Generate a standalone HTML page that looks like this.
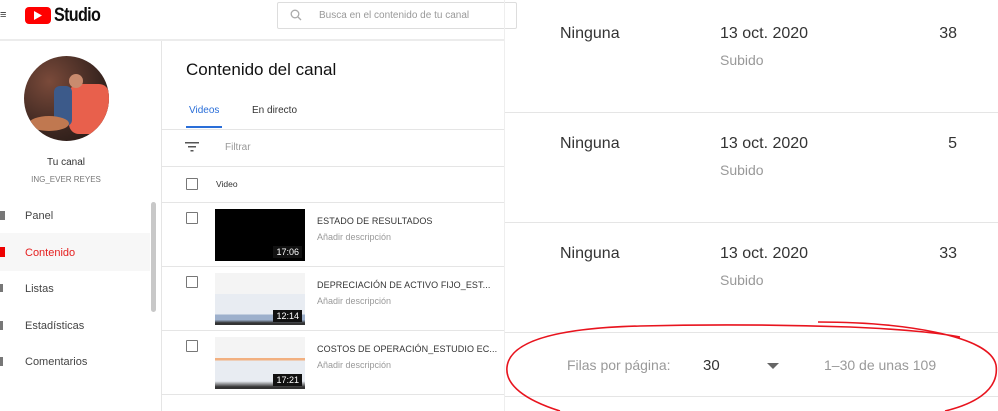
<!DOCTYPE html>
<html><head><meta charset="utf-8"><style>
*{margin:0;padding:0;box-sizing:border-box}
body{width:998px;height:411px;overflow:hidden;background:#fff;font-family:"Liberation Sans",sans-serif;position:relative;color:#0d0d0d}
.a{position:absolute}
.l{position:absolute;background:#e5e5e5}
.side{font-size:11px;color:#444}
.ttl{font-size:9px;color:#333;letter-spacing:.1px}
.desc{font-size:9px;color:#999}
.cb{position:absolute;width:12px;height:12px;border:1.5px solid #777;border-radius:1px}
.dur{position:absolute;right:3px;bottom:3px;background:#111;color:#fff;font-size:9px;padding:1px 3px}
.r{font-size:16px;color:#333}
.s{font-size:14px;color:#999}
</style></head><body>
<div class="a" style="left:0;top:9px;font-size:11px;color:#333">≡</div>
<div class="a" style="left:25px;top:7px;width:26px;height:17px;background:#f00;border-radius:4px"></div>
<svg class="a" style="left:34px;top:11px" width="9" height="9"><polygon points="0,0 8,4.5 0,9" fill="#fff"/></svg>
<div class="a" style="left:54px;top:5px;font-size:19px;line-height:22px;font-weight:bold;letter-spacing:-0.8px;transform:scaleX(.85);transform-origin:left">Studio</div>
<div class="a" style="left:277px;top:2px;width:240px;height:27px;border:1px solid #ddd;border-radius:2px"></div>
<svg class="a" style="left:290px;top:9px" width="12" height="12"><circle cx="5" cy="5" r="3.8" stroke="#aaa" stroke-width="1.3" fill="none"/><line x1="8" y1="8" x2="11" y2="11" stroke="#aaa" stroke-width="1.3"/></svg>
<div class="a" style="left:319px;top:10px;font-size:10px;color:#999">Busca en el contenido de tu canal</div>
<div class="l" style="left:0;top:39px;width:505px;height:2px;background:#ececec"></div>
<div class="l" style="left:161px;top:41px;width:1px;height:370px"></div>
<div class="a" style="left:24px;top:56px;width:85px;height:85px;border-radius:50%;overflow:hidden;background:radial-gradient(circle at 30% 30%,#7a4a3a,#3b2620 60%,#1e1512)">
<div class="a" style="left:45px;top:28px;width:40px;height:50px;background:#e8604c;border-radius:10px"></div>
<div class="a" style="left:45px;top:18px;width:14px;height:14px;background:#c98b6e;border-radius:50%"></div>
<div class="a" style="left:30px;top:30px;width:18px;height:40px;background:#3c5a8a;border-radius:6px"></div>
<div class="a" style="left:5px;top:60px;width:40px;height:15px;background:#c07850;border-radius:50%"></div>
</div>
<div class="a" style="left:0;top:157px;width:132px;text-align:center;font-size:10px;color:#333">Tu canal</div>
<div class="a" style="left:0;top:175px;width:132px;text-align:center;font-size:8px;color:#777">ING_EVER REYES</div>
<div class="a" style="left:0;top:211px;width:5px;height:9px;background:#777"></div>
<div class="a side" style="left:25px;top:210px">Panel</div>
<div class="a" style="left:0;top:233px;width:150px;height:38px;background:#f7f7f7"></div>
<div class="a" style="left:0;top:247px;width:5px;height:10px;background:#e00"></div>
<div class="a side" style="left:25px;top:247px;color:#e52020">Contenido</div>
<div class="a side" style="left:25px;top:283px">Listas</div>
<div class="a" style="left:0;top:284px;width:3px;height:8px;background:#777"></div>
<div class="a side" style="left:25px;top:320px">Estadísticas</div>
<div class="a" style="left:0;top:321px;width:3px;height:9px;background:#777"></div>
<div class="a side" style="left:25px;top:356px">Comentarios</div>
<div class="a" style="left:0;top:357px;width:3px;height:9px;background:#777"></div>
<div class="a" style="left:151px;top:202px;width:5px;height:110px;background:#c8c8c8;border-radius:3px"></div>
<div class="a" style="left:186px;top:60px;font-size:17px;color:#111">Contenido del canal</div>
<div class="a" style="left:189px;top:105px;font-size:10px;color:#2a6ed8">Videos</div>
<div class="a" style="left:252px;top:105px;font-size:10px;color:#333">En directo</div>
<div class="a" style="left:186px;top:126px;width:36px;height:2px;background:#2a6ed8"></div>
<div class="l" style="left:162px;top:129px;width:343px;height:1px"></div>
<svg class="a" style="left:185px;top:142px" width="14" height="10"><rect x="0" y="0" width="14" height="1.5" fill="#555"/><rect x="3" y="4" width="8" height="1.5" fill="#555"/><rect x="5.5" y="8" width="3" height="1.5" fill="#555"/></svg>
<div class="a" style="left:225px;top:142px;font-size:10px;color:#999">Filtrar</div>
<div class="l" style="left:162px;top:166px;width:343px;height:1px"></div>
<div class="cb" style="left:186px;top:178px"></div>
<div class="a" style="left:216px;top:179px;font-size:8.5px;color:#333">Video</div>
<div class="l" style="left:162px;top:202px;width:343px;height:1px"></div>
<div class="cb" style="left:186px;top:212px"></div>
<div class="a" style="left:215px;top:209px;width:90px;height:52px;background:#000"><div class="dur">17:06</div></div>
<div class="a ttl" style="left:317px;top:216px">ESTADO DE RESULTADOS</div>
<div class="a desc" style="left:317px;top:232px">Añadir descripción</div>
<div class="l" style="left:162px;top:266px;width:343px;height:1px"></div>
<div class="cb" style="left:186px;top:276px"></div>
<div class="a" style="left:215px;top:273px;width:90px;height:52px;background:linear-gradient(#f4f4f4 0 40%,#e8ecf2 40% 80%,#9db0cc 80% 90%,#333 96%)"><div class="dur">12:14</div></div>
<div class="a ttl" style="left:317px;top:280px">DEPRECIACIÓN DE ACTIVO FIJO_EST...</div>
<div class="a desc" style="left:317px;top:296px">Añadir descripción</div>
<div class="l" style="left:162px;top:330px;width:343px;height:1px"></div>
<div class="cb" style="left:186px;top:340px"></div>
<div class="a" style="left:215px;top:337px;width:90px;height:52px;background:linear-gradient(#f4f4f4 0 40%,#f2b080 40% 45%,#e8ecf2 45% 85%,#333 96%)"><div class="dur">17:21</div></div>
<div class="a ttl" style="left:317px;top:344px">COSTOS DE OPERACIÓN_ESTUDIO EC...</div>
<div class="a desc" style="left:317px;top:360px">Añadir descripción</div>
<div class="l" style="left:162px;top:394px;width:343px;height:1px"></div>
<div class="l" style="left:504px;top:0;width:1px;height:411px;background:#eee"></div>
<div class="a r" style="left:560px;top:25px">Ninguna</div>
<div class="a r" style="left:720px;top:25px">13 oct. 2020</div>
<div class="a r" style="left:900px;top:25px;width:57px;text-align:right">38</div>
<div class="a s" style="left:720px;top:52px">Subido</div>
<div class="l" style="left:505px;top:112px;width:493px;height:1px"></div>
<div class="a r" style="left:560px;top:135px">Ninguna</div>
<div class="a r" style="left:720px;top:135px">13 oct. 2020</div>
<div class="a r" style="left:900px;top:135px;width:57px;text-align:right">5</div>
<div class="a s" style="left:720px;top:162px">Subido</div>
<div class="l" style="left:505px;top:222px;width:493px;height:1px"></div>
<div class="a r" style="left:560px;top:245px">Ninguna</div>
<div class="a r" style="left:720px;top:245px">13 oct. 2020</div>
<div class="a r" style="left:900px;top:245px;width:57px;text-align:right">33</div>
<div class="a s" style="left:720px;top:272px">Subido</div>
<div class="l" style="left:505px;top:332px;width:493px;height:1px"></div>
<div class="a" style="left:567px;top:357px;font-size:14px;color:#999">Filas por página:</div>
<div class="a" style="left:703px;top:357px;font-size:15px;color:#333">30</div>
<svg class="a" style="left:767px;top:363px" width="12" height="6"><polygon points="0,0 12,0 6,6" fill="#666"/></svg>
<div class="a" style="left:824px;top:357px;font-size:14px;color:#999">1–30 de unas 109</div>
<div class="l" style="left:505px;top:396px;width:493px;height:1px"></div>
<svg class="a" style="left:0;top:0" width="998" height="411"><path d="M818 322 C900 322 990 335 996 365 C1000 392 970 405 945 411 M560 411 C525 400 505 385 507 367 C510 340 560 328 640 326 C720 324 790 325 850 327 C900 329 940 333 960 337" stroke="#e8141e" stroke-width="1.6" fill="none"/></svg>
</body></html>
